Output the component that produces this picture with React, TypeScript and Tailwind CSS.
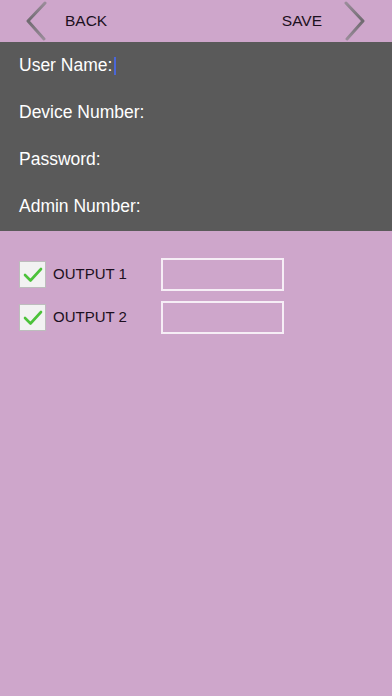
import { Fragment } from "react";

const fields = ["User Name:", "Device Number:", "Password:", "Admin Number:"];
const outputs = ["OUTPUT 1", "OUTPUT 2"];

function Chevron({ dir }: { dir: "left" | "right" }) {
  const d = dir === "left" ? "M19 2 L2 20 L18 38" : "M2 2 L19 20 L3 38";
  return (
    <svg width="22" height="40" viewBox="0 0 22 40">
      <defs>
        <linearGradient id={`g-${dir}`} x1="0" y1="0" x2="0" y2="1">
          <stop offset="0" stopColor="#9a8c9a" />
          <stop offset="0.5" stopColor="#6f6a70" />
          <stop offset="1" stopColor="#9a8c9a" />
        </linearGradient>
      </defs>
      <path d={d} fill="none" stroke={`url(#g-${dir})`} strokeWidth="3" strokeLinecap="round" strokeLinejoin="round" />
    </svg>
  );
}

function CheckBox() {
  return (
    <div className="flex h-[27px] w-[27px] items-center justify-center border border-[#bdbdbd] bg-[#f2f2f2]">
      <svg width="20" height="16" viewBox="0 0 20 16">
        <path d="M2 8 L7.5 13.5 L18 2" fill="none" stroke="#4cc23a" strokeWidth="2.6" strokeLinecap="round" strokeLinejoin="round" />
      </svg>
    </div>
  );
}

export default function App() {
  return (
    <div
      className="flex h-[696px] w-[392px] flex-col bg-[#cea6cb]"
      style={{ fontFamily: '"Liberation Sans", Arial, sans-serif' }}
    >
      {/* header */}
      <div className="flex h-[42px] items-center pl-[26px] pr-[26px]">
        <Chevron dir="left" />
        <span className="ml-[17px] text-[15.5px] text-[#1c1020]">BACK</span>
        <span className="ml-auto mr-[22px] text-[15.5px] text-[#1c1020]">SAVE</span>
        <Chevron dir="right" />
      </div>

      {/* form */}
      <div className="flex h-[189px] flex-col bg-[#5a5a5a] px-[19px]">
        {fields.map((f, i) => (
          <div key={f} className="flex h-[47px] items-center text-[17.5px] text-white">
            {f}
            {i === 0 && <span className="ml-[2px] inline-block h-[18px] w-[2px] bg-[#4a66d8]" />}
          </div>
        ))}
      </div>

      {/* outputs */}
      <div className="grid grid-cols-[142px_123px] gap-y-[10px] pl-[19px] pt-[27px]">
        {outputs.map((o) => (
          <Fragment key={o}>
            <div className="flex items-center">
              <CheckBox />
              <span className="ml-[7px] text-[15px] text-[#1c1020]">{o}</span>
            </div>
            <div className="h-[33px] border-2 border-[#f6eef6]" />
          </Fragment>
        ))}
      </div>
    </div>
  );
}
